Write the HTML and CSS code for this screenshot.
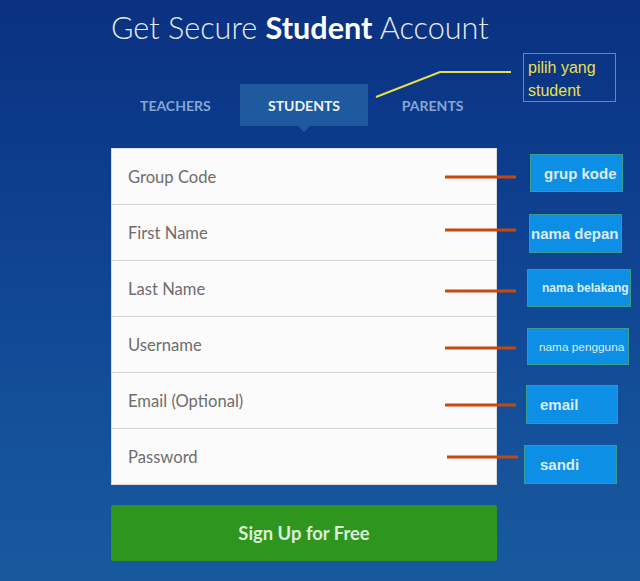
FILE: index.html
```html
<!DOCTYPE html>
<html lang="en">
<head>
<meta charset="utf-8">
<title>Get Secure Student Account</title>
<link rel="stylesheet" href="styles.css">
</head>
<body>
<main class="page">
  <h1 class="title">Get Secure <b>Student</b> Account</h1>
  <nav class="tabs">
    <a class="tab">TEACHERS</a>
    <a class="tab tab-active">STUDENTS</a>
    <a class="tab">PARENTS</a>
  </nav>
  <form class="form">
    <div class="field">Group Code</div>
    <div class="field">First Name</div>
    <div class="field">Last Name</div>
    <div class="field">Username</div>
    <div class="field">Email (Optional)</div>
    <div class="field">Password</div>
  </form>
  <button class="signup" type="button">Sign Up for Free</button>
</main>

<svg class="lines" width="640" height="581" viewBox="0 0 640 581">
  <polyline points="376,97 440,72 511,72" fill="none" stroke="#e6de4c" stroke-width="2"/>
  <g stroke="#c9470c" stroke-width="3">
    <line x1="445" y1="177" x2="516" y2="177"/>
    <line x1="445" y1="230" x2="516" y2="230"/>
    <line x1="445" y1="291" x2="516" y2="291"/>
    <line x1="445" y1="348" x2="516" y2="348"/>
    <line x1="445" y1="405" x2="516" y2="405"/>
    <line x1="447" y1="457" x2="518" y2="457"/>
  </g>
</svg>

<div class="callout">pilih yang<br>student</div>
<div class="note note-1">grup kode</div>
<div class="note note-2">nama depan</div>
<div class="note note-3">nama belakang</div>
<div class="note note-4">nama pengguna</div>
<div class="note note-5">email</div>
<div class="note note-6">sandi</div>
</body>
</html>
```

FILE: styles.css
```css
html, body {
  margin: 0;
  padding: 0;
}
body {
  width: 640px;
  height: 581px;
  overflow: hidden;
  position: relative;
  background: linear-gradient(to bottom, #0a3180 0%, #0c3b8b 25%, #104694 50%, #14519a 75%, #18599e 100%);
  font-family: Lato, "Open Sans", sans-serif;
}
.page {
  display: flex;
  flex-direction: column;
  width: 386px;
  padding-left: 111px;
}
.title {
  margin: 10px 0 0 0;
  font-size: 30.6px;
  line-height: 36px;
  font-weight: 300;
  color: #e6ebf3;
  white-space: nowrap;
}
.title b {
  font-weight: 700;
  color: #ffffff;
}
.tabs {
  display: grid;
  grid-template-columns: 1fr 1fr 1fr;
  margin-top: 38px;
  height: 42px;
}
.tab {
  position: relative;
  display: flex;
  align-items: center;
  justify-content: center;
  font-size: 14px;
  font-weight: 700;
  color: #86a6d2;
}
.tab-active {
  background: #1f5a9f;
  color: #eef3fa;
}
.tab-active::after {
  content: "";
  position: absolute;
  left: 50%;
  bottom: -6px;
  margin-left: -6px;
  border-left: 6px solid transparent;
  border-right: 6px solid transparent;
  border-top: 6px solid #1f5a9f;
}
.form {
  margin: 22px 0 0 0;
  background: #fbfbfb;
  border: 1px solid #dcdcdc;
  display: flex;
  flex-direction: column;
}
.field {
  height: 55px;
  display: flex;
  align-items: center;
  padding-left: 16px;
  font-size: 16.6px;
  color: #6f6d6d;
  border-bottom: 1px solid #d9d5d2;
}
.field:last-child {
  border-bottom: none;
}
.signup {
  margin-top: 20px;
  height: 56px;
  border: none;
  border-radius: 2px;
  background: #2e961f;
  color: #dcefd6;
  font-family: Lato, "Open Sans", sans-serif;
  font-size: 18.4px;
  font-weight: 700;
  padding: 0;
}
.lines {
  position: absolute;
  left: 0;
  top: 0;
  pointer-events: none;
}
.callout {
  position: absolute;
  left: 523px;
  top: 53px;
  width: 93px;
  height: 49px;
  box-sizing: border-box;
  border: 1px solid #8c8a4a;
  color: #e8e04c;
  font-family: "Liberation Sans", Arial, sans-serif;
  font-size: 16px;
  line-height: 23px;
  padding: 2px 0 0 4px;
}
.note {
  position: absolute;
  box-sizing: border-box;
  background: #0d8fe6;
  border: 1px solid #3a9c8c;
  color: #dcecf8;
  font-family: "Liberation Sans", Arial, sans-serif;
  font-weight: 700;
  font-size: 15px;
  display: flex;
  align-items: center;
  white-space: nowrap;
}
.note-1 { left: 530px; top: 154px; width: 93px; height: 38px; padding-left: 13px; }
.note-2 { left: 529px; top: 214px; width: 93px; height: 39px; padding-left: 1px; }
.note-3 { left: 527px; top: 269px; width: 104px; height: 38px; padding-left: 14px; font-size: 12px; }
.note-4 { left: 527px; top: 328px; width: 102px; height: 37px; padding-left: 11px; font-size: 11.8px; font-weight: 400; }
.note-5 { left: 526px; top: 385px; width: 92px; height: 39px; padding-left: 13px; }
.note-6 { left: 524px; top: 445px; width: 93px; height: 39px; padding-left: 15px; }
```
